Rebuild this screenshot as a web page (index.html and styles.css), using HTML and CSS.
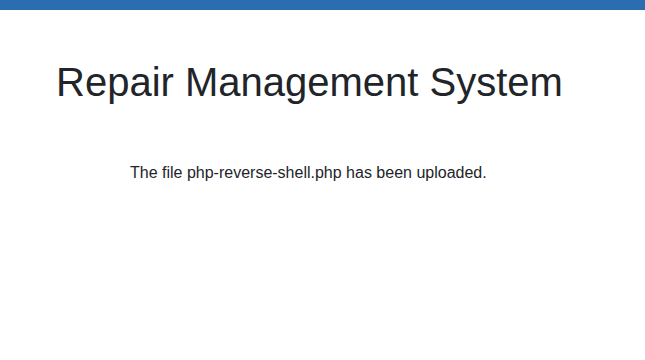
FILE: index.html
```html
<!DOCTYPE html>
<html lang="en">
<head>
    <meta charset="UTF-8">
    <title>Repair Management System</title>
    <link rel="stylesheet" href="styles.css">
</head>
<body>
    <div class="top-bar"></div>
    <div class="container">
        <h1 class="title">Repair Management System</h1>
        <p class="message">The file php-reverse-shell.php has been uploaded.</p>
    </div>
</body>
</html>
```

FILE: styles.css
```css
body {
    margin: 0;
    font-family: 'Liberation Sans', Arial, sans-serif;
    color: #212529;
    background-color: #fff;
}

.top-bar {
    height: 10px;
    background-color: #2a6db0;
}

.container {
    padding: 0 56px;
}

.title {
    font-size: 40px;
    font-weight: normal;
    margin: 48px 0 0 0;
    line-height: 1.2;
}

.message {
    font-size: 16px;
    margin: 58px 0 0 74px;
}
```
